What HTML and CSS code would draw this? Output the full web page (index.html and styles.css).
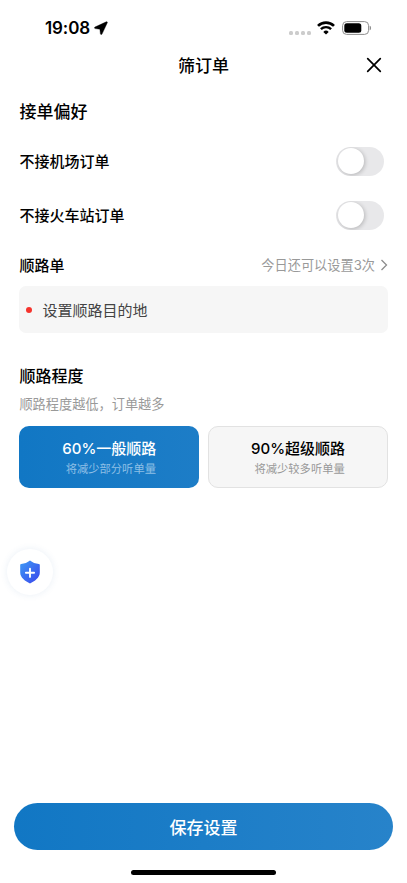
FILE: index.html
```html
<!DOCTYPE html>
<html lang="zh-CN">
<head>
<meta charset="utf-8">
<meta name="viewport" content="width=device-width, initial-scale=1">
<title>筛订单</title>
<link rel="stylesheet" href="styles.css">
</head>
<body>
<div class="screen">
  <div class="status">
    <span class="time">19:08</span>
    <svg class="location" width="14" height="14" viewBox="0 0 14 14"><path d="M12.300.8.900 6.100c-.7.400-.5 1.400.3 1.500l4.700.6.500 4.600c.1.900 1.200 1.100 1.600.3l5.300-11.300c.3-.7-.3-1.300-1-1Z" stroke="#000" stroke-width=".4"/></svg>
    <span class="dots"><i></i><i></i><i></i><i></i></span>
    <svg class="wifi" width="18" height="14" viewBox="0 0 18 14" fill="none" stroke="#000"><path d="M1 4.900a11.500 11.500 0 0 1 16 0" stroke-width="2.700"/><path d="M3.900 8.200a7.300 7.300 0 0 1 10.200 0" stroke-width="2.400"/><path d="M9 13.400 6.300 10.900a3.900 3.900 0 0 1 5.400 0Z" fill="#000" stroke="none"/></svg>
    <svg class="battery" width="30" height="14" viewBox="0 0 30 14"><rect x=".6" y=".6" width="26" height="12.800" rx="4" fill="none" stroke="#8d8d8d"/><rect x="2.300" y="2.300" width="17" height="9.400" rx="2.500"/><path d="M27.700 4.700c1.800.5 1.800 4.100 0 4.600Z" fill="#8d8d8d"/></svg>
  </div>
  <header class="header">
    <h1>筛订单</h1>
    <svg class="close" width="16" height="16" viewBox="0 0 16 16"><path d="m1.700 1.700 12.600 12.600m0-12.600L1.700 14.300" stroke="#000" stroke-width="1.700" stroke-linecap="round"/></svg>
  </header>
  <main class="content">
    <h2 class="section-title">接单偏好</h2>
    <div class="row"><span class="label">不接机场订单</span><span class="toggle"></span></div>
    <div class="row"><span class="label">不接火车站订单</span><span class="toggle"></span></div>
    <div class="row route"><span>顺路单</span><span class="quota">今日还可以设置3次<svg width="8" height="12" viewBox="0 0 8 12"><path d="m1.500 1 5 5-5 5" fill="none" stroke="#8c8c8c" stroke-width="1.300"/></svg></span></div>
    <div class="destination"><i class="dot"></i><span>设置顺路目的地</span></div>
    <h2 class="degree-title">顺路程度</h2>
    <p class="hint">顺路程度越低，订单越多</p>
    <div class="options">
      <div class="option selected"><strong>60%一般顺路</strong><small>将减少部分听单量</small></div>
      <div class="option"><strong>90%超级顺路</strong><small>将减少较多听单量</small></div>
    </div>
  </main>
  <div class="shield">
    <svg width="22" height="24" viewBox="0 0 22 24"><defs><linearGradient id="g" x1="0" y1="0" x2="1" y2="1"><stop offset="0" stop-color="#3d9af5"/><stop offset="1" stop-color="#3b45ec"/></linearGradient></defs><path d="M11 .5c2.500 2 5.500 3.200 8.800 3.500.7.100 1 .5 1 1.100v7.400c0 5.200-5.200 8.800-9.800 11-4.600-2.200-9.800-5.800-9.800-11V5.100c0-.6.3-1 1-1.100C5.500 3.700 8.500 2.500 11 .5Z" fill="url(#g)"/><path d="M11 8.700v8.200M6.900 12.800h8.200" stroke="#fff" stroke-width="1.900" stroke-linecap="round"/></svg>
  </div>
  <footer class="footer">
    <div class="save">保存设置</div>
    <div class="home"></div>
  </footer>
</div>
</body>
</html>
```
FILE: styles.css
```css
* { box-sizing: border-box; }
body { margin: 0; background: #fff; color: #000; font-family: Inter, "Noto Sans CJK SC", sans-serif; }
h1, h2, p { margin: 0; }
svg { display: block; flex: none; }
.screen { position: relative; height: 883px; display: flex; flex-direction: column; overflow: hidden; }
.status { height: 43px; padding: 13px 35px 0 45px; display: flex; align-items: center; flex: none; }
.time { font-size: 17px; line-height: 30px; font-weight: 600; letter-spacing: -0.100px; width: 46px; white-space: nowrap; }
.location { margin-left: 3px; }
.dots { margin-left: auto; display: flex; gap: 2px; padding-top: 9px; }
.dots i { width: 4px; height: 4px; border-radius: 1.500px; background: #ccc; }
.wifi { margin-left: 6px; }
.battery { margin-left: 7px; }
.header { height: 44px; display: flex; align-items: center; justify-content: center; flex: none; position: relative; }
.header h1 { font-size: 17px; line-height: 24px; font-weight: 500; padding-top: 2px; }
.close { position: absolute; right: 25px; top: 14px; }
.content { padding: 0 19px 0 19.450px; display: flex; flex-direction: column; }
.section-title { height: 47px; line-height: 51px; font-size: 17px; font-weight: 500; }
.row { height: 54px; display: flex; align-items: center; justify-content: space-between; font-size: 15px; font-weight: 500; }
.label { padding-bottom: 2px; }
.toggle { width: 48px; height: 29px; margin-right: 4px; padding: 1.500px 2px; border-radius: 15px; background: #e8e8ea; overflow: hidden; }
.toggle::before { content: ""; display: block; width: 26px; height: 26px; border-radius: 50%; background: #fff; box-shadow: 1px 1px 4px rgba(0,0,0,.22); }
.route { height: 44px; }
.quota { display: flex; align-items: center; gap: 5px; font-size: 13.200px; font-weight: 400; color: #999; }
.quota svg { position: relative; top: 1px; }
.destination { height: 47px; border-radius: 7px; background: #f6f6f6; display: flex; align-items: center; padding-left: 7px; font-size: 15px; color: #444; }
.dot { width: 6px; height: 6px; border-radius: 50%; background: #f5332c; margin-right: 10px; }
.degree-title { margin-top: 31px; font-size: 16px; line-height: 24px; font-weight: 500; }
.hint { margin-top: 6px; font-size: 13.200px; line-height: 20px; color: #999; }
.options { margin-top: 12px; display: grid; grid-template-columns: 1fr 1fr; gap: 9px; }
.option { height: 62px; border: 1px solid #e2e2e2; border-radius: 10px; background: #f6f6f6; display: flex; flex-direction: column; align-items: center; padding-top: 10px; }
.option strong { font-size: 15px; line-height: 23px; font-weight: 500; }
.option small { font-size: 11.300px; line-height: 17px; color: #999; padding: 1px 0 0 3px; }
.selected { border: 0; padding-top: 11px; background: linear-gradient(90deg, #1177c4, #1d7dc7); color: #fff; }
.selected small { color: #8dbfe5; }
.shield { position: absolute; left: 7px; top: 549px; width: 46px; height: 46px; border-radius: 50%; background: #fff; box-shadow: 0 0 7px rgba(70,120,180,.12); display: flex; align-items: center; justify-content: center; }
.footer { margin-top: auto; height: 80px; padding: 0 14.500px 0 14.450px; flex: none; }
.save { height: 47px; padding-bottom: 1px; border-radius: 24px; background: linear-gradient(90deg, #1177c4, #2783ca); color: #fff; font-size: 17px; font-weight: 500; display: flex; align-items: center; justify-content: center; }
.home { width: 145px; height: 5px; margin: 20px auto 0; border-radius: 3px; background: #000; }
```
